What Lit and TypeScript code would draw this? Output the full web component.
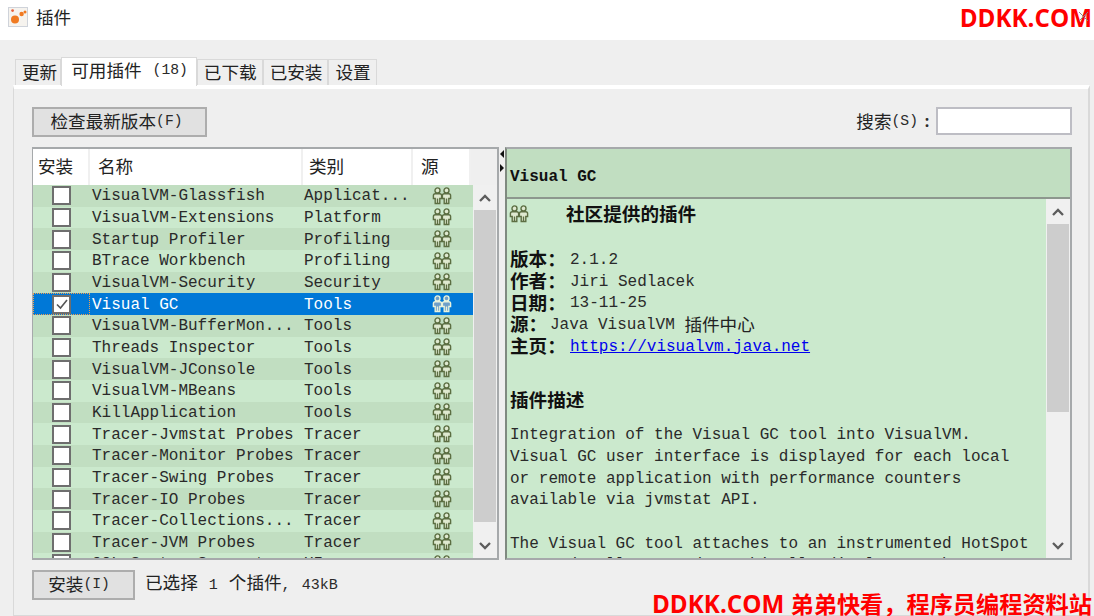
import { LitElement, html, css } from "lit";
import { customElement } from "lit/decorators.js";

const rows: [string, string][] = [
  ["VisualVM-Glassfish", "Applicat..."],
  ["VisualVM-Extensions", "Platform"],
  ["Startup Profiler", "Profiling"],
  ["BTrace Workbench", "Profiling"],
  ["VisualVM-Security", "Security"],
  ["Visual GC", "Tools"],
  ["VisualVM-BufferMon...", "Tools"],
  ["Threads Inspector", "Tools"],
  ["VisualVM-JConsole", "Tools"],
  ["VisualVM-MBeans", "Tools"],
  ["KillApplication", "Tools"],
  ["Tracer-Jvmstat Probes", "Tracer"],
  ["Tracer-Monitor Probes", "Tracer"],
  ["Tracer-Swing Probes", "Tracer"],
  ["Tracer-IO Probes", "Tracer"],
  ["Tracer-Collections...", "Tracer"],
  ["Tracer-JVM Probes", "Tracer"],
  ["OQL Syntax Support", "UI"],
];

const people = (color: string, fill: string) => html`<svg class="people" viewBox="0 0 20 18" width="20" height="18" fill=${fill} stroke=${color} stroke-width="1.4">
  <circle cx="5.5" cy="3.4" r="2.5"/><path d="M3.2 16.5V11.5H1.4V8.6Q1.4 6.8 3.2 6.8H7.8Q9.6 6.8 9.6 8.6V11.5H7.8V16.5ZM5.5 11.5V16.5"/>
  <circle cx="14.5" cy="3.4" r="2.5"/><path d="M12.2 16.5V11.5H10.4V8.6Q10.4 6.8 12.2 6.8H16.8Q18.6 6.8 18.6 8.6V11.5H16.8V16.5ZM14.5 11.5V16.5"/>
</svg>`;

const chevron = (up: boolean) => html`<svg viewBox="0 0 12 8" width="12" height="8" fill="none" stroke="#5c5c5c" stroke-width="2.3"><path d=${up ? "M1 7L6 2L11 7" : "M1 1L6 6L11 1"}/></svg>`;

@customElement("app-root")
export class AppRoot extends LitElement {
  static styles = css`
    :host { display: block; width: 1094px; height: 616px; overflow: hidden; background: #efefef; position: relative; font-family: "Liberation Mono", "Noto Sans CJK SC", monospace; font-size: 16px; color: #2a2a2a; }
    .z { font-family: "Noto Sans CJK SC", sans-serif; font-size: 17.6px; line-height: 1; color: #222; }
    .zb { font-family: "Noto Sans CJK SC", sans-serif; font-size: 18.6px; line-height: 1; font-weight: bold; color: #111; }
    .sm { font-size: 14.7px; }
    .title { height: 40px; background: #fff; display: flex; align-items: center; padding: 0 0 6px 8px; box-sizing: border-box; gap: 8px; }
    .wrap { padding: 17px 4px 0 13px; }
    .tabs { display: flex; height: 28px; align-items: flex-end; padding-left: 2px; }
    .tab { height: 26px; box-sizing: border-box; border: 1px solid #d9d9d9; border-bottom: none; background: #efefef; padding: 0 5px 2px 6px; display: flex; align-items: center; white-space: nowrap; }
    .tab.first { padding: 0 3px 2px 6px; }
    .tab.active { height: 29px; background: #fff; padding: 0 8px 5px 9px; margin-bottom: -1px; position: relative; gap: 11px; }
    .panel { border: 1px solid #d9d9d9; border-right-width: 2px; border-top: 4px solid #fff; height: 531px; box-sizing: border-box; background: #efefef; padding: 18px 16px 0 18px; }
    .toolbar { display: flex; justify-content: space-between; align-items: flex-start; height: 30px; }
    .btn { background: #e1e1e1; border: 2px solid #adadad; box-sizing: border-box; height: 30px; display: flex; align-items: center; justify-content: center; white-space: nowrap; padding-bottom: 3px; }
    .check { width: 175px; padding-right: 6px; }
    .search { display: flex; align-items: center; height: 28px; }
    .colon { width: 18px; text-align: center; font-weight: bold; font-family: "Noto Sans", sans-serif; font-size: 16px; }
    .input { width: 136px; height: 28px; box-sizing: border-box; background: #fff; border: 2px solid #bdbdc4; }
    .split { display: flex; margin-top: 10px; height: 413px; }
    .table { width: 467px; flex: none; box-sizing: border-box; border: 2px solid #a6a9ab; border-left-width: 1px; display: flex; flex-direction: column; overflow: hidden; background: #efefef; }
    .thead { display: grid; grid-template-columns: 57px 213px 110px 58px; height: 36px; flex: none; }
    .th { background: #fff; border-right: 2px solid #f0f0f0; padding: 0 0 2px 5px; display: flex; align-items: center; box-sizing: border-box; }
    .th.n { padding-left: 8px; }
    .th.c { padding-left: 6px; }
    .th.s { padding-left: 8px; }
    .tbody { display: flex; flex: 1; min-height: 0; }
    .list { width: 440px; flex: none; overflow: hidden; }
    .row { display: grid; grid-template-columns: 57px 213px 110px 60px; height: 21.67px; align-items: center; background: #cbe9cd; white-space: nowrap; }
    .row.odd { background: #c1dec1; }
    .row.sel { background: #0078d7; color: #fff; }
    .box { width: 19px; height: 19px; box-sizing: border-box; background: #fff; border: 2px solid #6e6e6e; margin-left: 19px; display: flex; align-items: center; justify-content: center; }
    .cell-n, .cell-c { padding: 1px 0 0 2px; overflow: hidden; }
    .cell-c { padding-left: 1px; }
    .cell-s { display: flex; justify-content: center; padding-right: 2px; }
    .boxcell { position: relative; height: 100%; display: flex; align-items: center; }
    .focus { position: absolute; inset: 0; border: 1px dotted #f0a050; pointer-events: none; }
    .sb { width: 24px; flex: none; display: flex; flex-direction: column; background: #f0f0f0; }
    .sb-btn { height: 25px; display: flex; align-items: center; justify-content: center; flex: none; }
    .sb-track { flex: 1; display: flex; flex-direction: column; padding-left: 1px; padding-right: 1px; min-height: 0; }
    .sb-thumb { background: #cdcdcd; }
    .divider { width: 6px; position: relative; flex: none; }
    .arrow { position: absolute; left: 1px; width: 0; height: 0; border-top: 4px solid transparent; border-bottom: 4px solid transparent; }
    .arrow.l { top: 3px; border-right: 4px solid #111; }
    .arrow.r { top: 17px; border-left: 4px solid #111; }
    .detail { flex: 1; min-width: 0; border: 2px solid #a6a9ab; border-left-color: #7f8a80; display: flex; flex-direction: column; box-sizing: border-box; overflow: hidden; background: #cbe9cd; }
    .dhead { height: 50px; flex: none; background: #c1dec1; border-bottom: 2px solid #8d978e; box-sizing: border-box; display: flex; align-items: center; padding: 7px 0 0 3px; font-weight: bold; font-size: 16px; color: #111; }
    .dbody { flex: 1; display: flex; min-height: 0; }
    .doc { flex: 1; min-width: 0; padding: 7.5px 0 0 3px; overflow: hidden; white-space: nowrap; }
    .ln { height: 21.67px; line-height: 21.67px; display: flex; align-items: center; }
    .ln .lbl { display: inline-block; width: 60px; flex: none; padding-bottom: 5px; }
    .ln .lbl.short { width: 40px; }
    .ln .z { padding-bottom: 5px; }
    .dt { height: 22px; line-height: 22px; margin: -4px 0 4px -1px; display: flex; align-items: center; }
    .dt .people { margin-right: 37px; margin-top: 1px; }
    .h2 { margin: 29.5px 0 15.5px; height: 22px; display: flex; align-items: center; }
    a { color: #0000ee; text-decoration: underline; }
    .sp { display: inline-block; width: 9.6px; }
    .sp.w { width: 11px; }
    .footer { display: flex; align-items: center; margin-top: 10px; gap: 10px; height: 30px; }
    .install { width: 103px; padding-right: 9px; }
    .status { display: flex; align-items: baseline; font-size: 15px; padding-bottom: 3px; white-space: nowrap; }
    .wm { position: absolute; right: 2px; color: #ff0000; font-family: "Open Sans", "Noto Sans CJK SC", sans-serif; font-weight: 700; line-height: 28px; white-space: nowrap; }
    .wm1 { top: 4px; font-size: 24.2px; }
    .wm2 { top: 590px; font-size: 24.2px; }
    .wm2 span { font-size: 23.2px; }
    .x { position: absolute; left: 1078px; top: 11px; }
  `;

  render() {
    return html`
      <div class="title">
        <svg width="20" height="20" viewBox="0 0 20 20"><rect x="0.5" y="0.5" width="19" height="19" fill="#f6f3ee" stroke="#cfd3da"/><circle cx="7" cy="12.5" r="4" fill="#f07a22"/><circle cx="13.6" cy="7" r="2.2" fill="#f07a22"/><circle cx="17" cy="5" r="1.5" fill="#f07a22"/><circle cx="4.6" cy="3.6" r="1.4" fill="#e8603a"/></svg>
        <span class="z">插件</span>
      </div>
      <div class="wrap">
        <div class="tabs">
          <div class="tab first"><span class="z">更新</span></div>
          <div class="tab active"><span class="z">可用插件</span><span class="sm">(18)</span></div>
          <div class="tab"><span class="z">已下载</span></div>
          <div class="tab"><span class="z">已安装</span></div>
          <div class="tab"><span class="z">设置</span></div>
        </div>
        <div class="panel">
          <div class="toolbar">
            <div class="btn check"><span class="z">检查最新版本</span><span class="sm">(F)</span></div>
            <div class="search"><span class="z">搜索</span><span class="sm">(S)</span><span class="colon">:</span><div class="input"></div></div>
          </div>
          <div class="split">
            <div class="table">
              <div class="thead">
                <div class="th"><span class="z">安装</span></div><div class="th n"><span class="z">名称</span></div><div class="th c"><span class="z">类别</span></div><div class="th s"><span class="z">源</span></div>
              </div>
              <div class="tbody">
                <div class="list">
                  ${rows.map((r, i) => {
                    const sel = r[0] === "Visual GC";
                    return html`
                    <div class="row ${i % 2 === 0 ? "odd" : ""} ${sel ? "sel" : ""}">
                      <div class="boxcell">
                        <div class="box">${sel ? html`<svg width="14" height="14" viewBox="0 0 14 14" fill="none" stroke="#555" stroke-width="1.6"><path d="M2 7.5L5.5 11L12 3"/></svg>` : ""}</div>
                        ${sel ? html`<div class="focus"></div>` : ""}
                      </div>
                      <div class="cell-n">${r[0]}</div>
                      <div class="cell-c">${r[1]}</div>
                      <div class="cell-s">${sel ? people("#e8f2dc", "#6f9fc8") : people("#5c6e42", "#dfe9d0")}</div>
                    </div>`;
                  })}
                </div>
                <div class="sb">
                  <div class="sb-btn">${chevron(true)}</div>
                  <div class="sb-track"><div class="sb-thumb" style="height:312px"></div></div>
                  <div class="sb-btn">${chevron(false)}</div>
                </div>
              </div>
            </div>
            <div class="divider"><div class="arrow l"></div><div class="arrow r"></div></div>
            <div class="detail">
              <div class="dhead">Visual GC</div>
              <div class="dbody">
                <div class="doc">
                  <div class="dt">${people("#5c6e42", "#dfe9d0")}<span class="zb">社区提供的插件</span></div>
                  <div class="ln"></div>
                  <div class="ln"><span class="lbl zb">版本：</span>2.1.2</div>
                  <div class="ln"><span class="lbl zb">作者：</span>Jiri Sedlacek</div>
                  <div class="ln"><span class="lbl zb">日期：</span>13-11-25</div>
                  <div class="ln"><span class="lbl short zb">源：</span>Java VisualVM<span class="sp"></span><span class="z">插件中心</span></div>
                  <div class="ln"><span class="lbl zb">主页：</span><a>https://visualvm.java.net</a></div>
                  <div class="h2"><span class="zb">插件描述</span></div>
                  <div class="ln">Integration of the Visual GC tool into VisualVM.</div>
                  <div class="ln">Visual GC user interface is displayed for each local</div>
                  <div class="ln">or remote application with performance counters</div>
                  <div class="ln">available via jvmstat API.</div>
                  <div class="ln"></div>
                  <div class="ln">The Visual GC tool attaches to an instrumented HotSpot</div>
                  <div class="ln">JVM and collects and graphically displays garbage</div>
                </div>
                <div class="sb">
                  <div class="sb-btn">${chevron(true)}</div>
                  <div class="sb-track"><div class="sb-thumb" style="height:188px"></div></div>
                  <div class="sb-btn">${chevron(false)}</div>
                </div>
              </div>
            </div>
          </div>
          <div class="footer">
            <div class="btn install"><span class="z">安装</span><span class="sm">(I)</span></div>
            <div class="status"><span class="z">已选择</span><span class="sp w"></span>1<span class="sp w"></span><span class="z">个插件</span>,<span class="sp w"></span>43kB</div>
          </div>
        </div>
      </div>
      <div class="wm wm1">DDKK.COM</div>
      <div class="wm wm2">DDKK.COM <span>弟弟快看，程序员编程资料站</span></div>
      <svg class="x" width="11" height="11" viewBox="0 0 11 11" stroke="#888" fill="none"><path d="M1 1L10 10M10 1L1 10"/></svg>
    `;
  }
}
